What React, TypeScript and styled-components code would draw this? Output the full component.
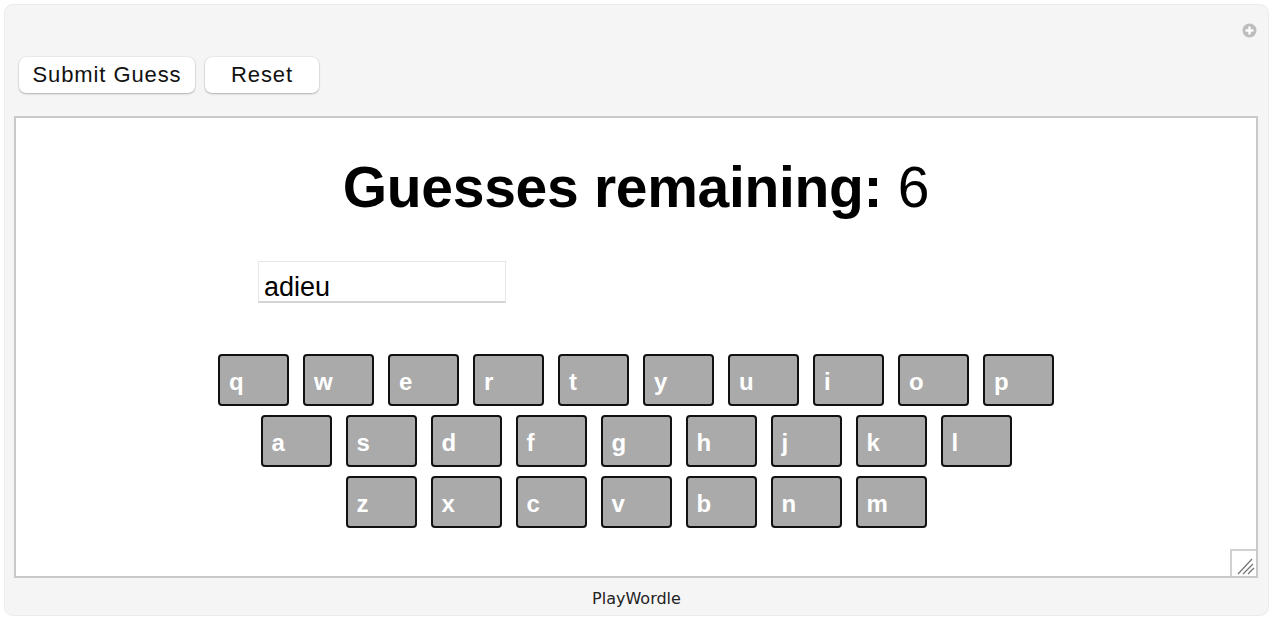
import React from "react"
import styled, {createGlobalStyle} from "styled-components"

const GlobalStyle = createGlobalStyle`
  html, body {
    margin: 0;
    padding: 0;
    background: #ffffff;
    font-family: "Liberation Sans", Arial, sans-serif;
  }
`

const Frame = styled.div`
  box-sizing: border-box;
  margin: 4px 5px 4px 4px;
  height: 612px;
  background: #f5f5f5;
  border: 1px solid #ececec;
  border-radius: 9px;
  display: flex;
  flex-direction: column;
  position: relative;
`

const PlusIcon = styled.div`
  position: absolute;
  top: 18px;
  right: 11px;
  width: 15px;
  height: 15px;
`

const Toolbar = styled.div`
  display: flex;
  gap: 10px;
  padding: 52px 0 0 14px;
  height: 36px;
`

const ToolButton = styled.button<{ $w: number }>`
  box-sizing: border-box;
  width: ${p => p.$w}px;
  height: 36px;
  background: #ffffff;
  border: none;
  border-radius: 7px;
  box-shadow: 0 1px 2px rgba(0, 0, 0, 0.25), 0 0 0 0.5px rgba(0, 0, 0, 0.08);
  font-family: "Liberation Sans", Arial, sans-serif;
  font-size: 22px;
  letter-spacing: 0.9px;
  color: #111;
  padding: 0;
`

const Stage = styled.div`
  box-sizing: border-box;
  margin: 23px 10px 0 9px;
  height: 462px;
  background: #ffffff;
  border: 2px solid #c9c9c9;
  display: flex;
  flex-direction: column;
  align-items: center;
  position: relative;
`

const Title = styled.h1`
  margin: 36px 0 0 0;
  font-size: 57px;
  line-height: 66px;
  font-weight: bold;
  color: #000;
  letter-spacing: -0.3px;
  span {
    font-weight: normal;
  }
`

const InputRow = styled.div`
  align-self: stretch;
  padding: 41px 0 0 242px;
`

const GuessInput = styled.input`
  box-sizing: border-box;
  width: 248px;
  height: 42px;
  border: 1px solid #e6e6e6;
  border-bottom: 2px solid #d4d4d4;
  font-family: "Liberation Sans", Arial, sans-serif;
  font-size: 27px;
  padding: 11px 5px 0;
  color: #000;
  outline: none;
`

const Keyboard = styled.div`
  margin-top: 51px;
  display: flex;
  flex-direction: column;
  align-items: center;
  gap: 9px;
`

const KeyRow = styled.div`
  display: flex;
  gap: 14px;
`

const Key = styled.div`
  box-sizing: border-box;
  width: 71px;
  height: 52px;
  background: #aaaaaa;
  border: 2px solid #111;
  border-radius: 4px;
  color: #fff;
  font-weight: bold;
  font-size: 24px;
  display: flex;
  align-items: center;
  padding: 4px 0 0 9px;
`

const ResizeHandle = styled.div`
  position: absolute;
  right: 0;
  bottom: 0;
  width: 26px;
  height: 27px;
  box-sizing: border-box;
  border-left: 2px solid #d0d0d0;
  border-top: 2px solid #d0d0d0;
`

const Footer = styled.div`
  flex: 1;
  display: flex;
  align-items: center;
  justify-content: center;
  font-family: "DejaVu Sans", "Liberation Sans", sans-serif;
  font-size: 16px;
  color: #222;
  padding-top: 4px;
`

const rows = ["qwertyuiop", "asdfghjkl", "zxcvbnm"]

export default function App() {
  return (
    <>
      <GlobalStyle/>
      <Frame>
        <PlusIcon>
          <svg width="15" height="15" viewBox="0 0 15 15">
            <circle cx="7.5" cy="7.5" r="7" fill="#bdbdbd"/>
            <rect x="3.5" y="6.3" width="8" height="2.4" fill="#fff"/>
            <rect x="6.3" y="3.5" width="2.4" height="8" fill="#fff"/>
          </svg>
        </PlusIcon>
        <Toolbar>
          <ToolButton $w={176}>Submit Guess</ToolButton>
          <ToolButton $w={114}>Reset</ToolButton>
        </Toolbar>
        <Stage>
          <Title>Guesses remaining: <span>6</span></Title>
          <InputRow>
            <GuessInput defaultValue="adieu"/>
          </InputRow>
          <Keyboard>
            {rows.map(r => (
              <KeyRow key={r}>
                {r.split("").map(c => <Key key={c}>{c}</Key>)}
              </KeyRow>
            ))}
          </Keyboard>
          <ResizeHandle>
            <svg width="24" height="25" viewBox="0 0 24 25">
              <line x1="6" y1="23" x2="20" y2="8" stroke="#777" strokeWidth="1.3"/>
              <line x1="11" y1="23" x2="21" y2="13" stroke="#777" strokeWidth="1.3"/>
              <line x1="16" y1="23" x2="22" y2="17" stroke="#777" strokeWidth="1.3"/>
            </svg>
          </ResizeHandle>
        </Stage>
        <Footer>PlayWordle</Footer>
      </Frame>
    </>
  )
}
